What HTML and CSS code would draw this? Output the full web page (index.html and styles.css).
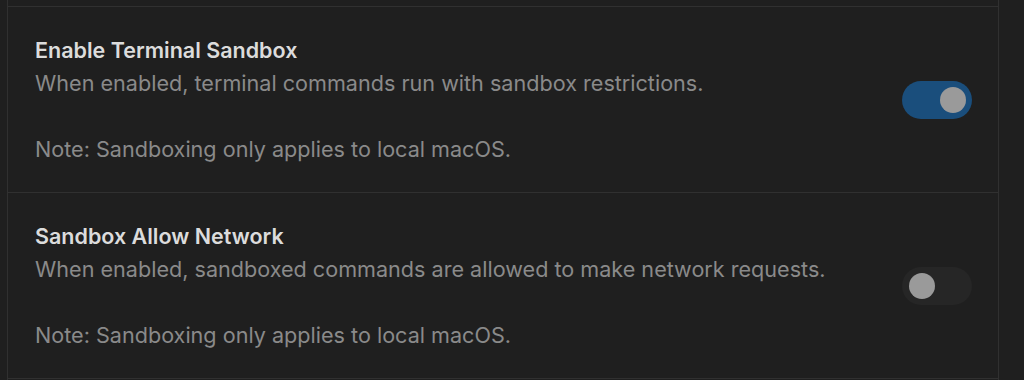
FILE: index.html
```html
<!DOCTYPE html>
<html lang="en">
<head>
<meta charset="utf-8">
<title>Settings</title>
<link rel="stylesheet" href="styles.css">
</head>
<body>
<div class="list">
  <div class="row prev"></div>
  <div class="row">
    <div class="text">
      <div class="title">Enable Terminal Sandbox</div>
      <div class="desc">When enabled, terminal commands run with sandbox restrictions.</div>
      <div class="desc blank">&nbsp;</div>
      <div class="desc">Note: Sandboxing only applies to local macOS.</div>
    </div>
    <div class="toggle on"><span class="knob"></span></div>
  </div>
  <div class="row">
    <div class="text">
      <div class="title">Sandbox Allow Network</div>
      <div class="desc">When enabled, sandboxed commands are allowed to make network requests.</div>
      <div class="desc blank">&nbsp;</div>
      <div class="desc">Note: Sandboxing only applies to local macOS.</div>
    </div>
    <div class="toggle"><span class="knob"></span></div>
  </div>
</div>
</body>
</html>
```

FILE: styles.css
```css
html, body {
  margin: 0;
  padding: 0;
  background: #1f1f1f;
  height: 100%;
  overflow: hidden;
}

body {
  font-family: Inter, "Noto Sans", "Liberation Sans", sans-serif;
}

.list {
  margin-left: 7px;
  width: 990px;
  border-left: 1px solid #303030;
  border-right: 1px solid #303030;
  min-height: 100%;
}

.row {
  display: flex;
  align-items: center;
  justify-content: space-between;
  height: 185px;
  border-top: 1px solid #303030;
  padding: 0 26px 0 27px;
  box-sizing: content-box;
}

.row.prev {
  height: 6px;
  border-top: none;
}

.row:last-child {
  border-bottom: 1px solid #303030;
}

.text {
  display: flex;
  flex-direction: column;
}

.title {
  font-size: 21.5px;
  line-height: 33px;
  font-weight: 600;
  color: #dcdcdc;
}

.desc {
  font-size: 21.6px;
  line-height: 33px;
  color: #8a8a8a;
}

.toggle {
  width: 70px;
  height: 38px;
  border-radius: 19px;
  background: #262626;
  display: flex;
  align-items: center;
  justify-content: flex-start;
  padding: 0 7px;
  box-sizing: border-box;
}

.toggle.on {
  background: #1a4e7c;
  justify-content: flex-end;
  padding: 0 6px;
}

.knob {
  width: 26px;
  height: 26px;
  border-radius: 50%;
  background: #9a9a9a;
}
```
